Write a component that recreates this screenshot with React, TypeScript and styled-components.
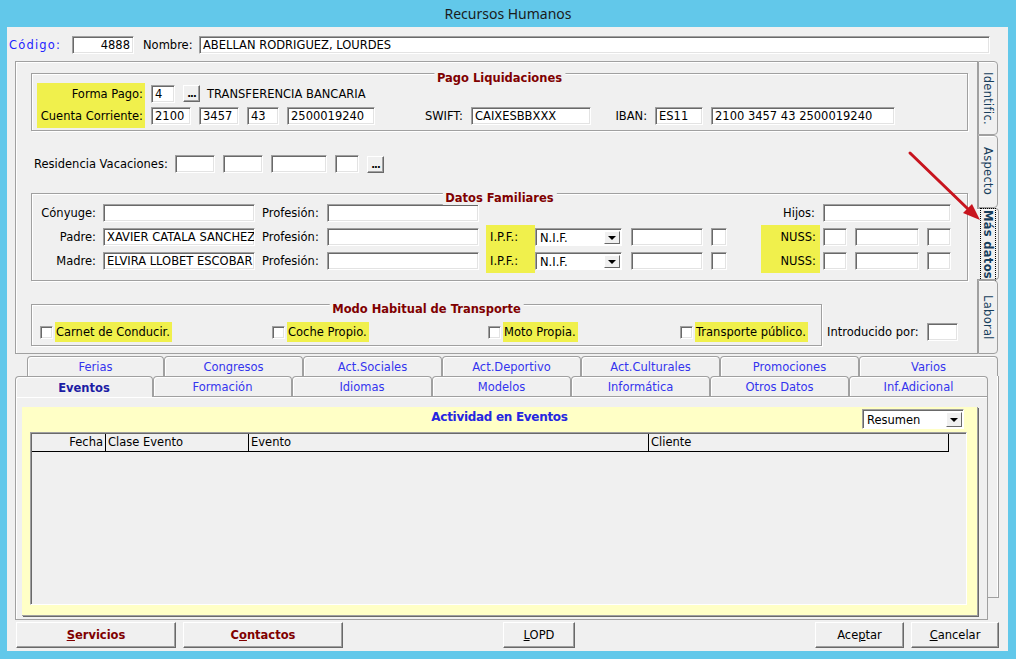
import React from "react";
import styled, { createGlobalStyle } from "styled-components";

const GlobalStyle = createGlobalStyle`
  html, body {
    margin: 0;
    padding: 0;
  }
  body {
    font-family: "DejaVu Sans", Verdana, sans-serif;
    font-size: 11.5px;
    color: #000;
  }
  * {
    box-sizing: border-box;
  }
`;

const YELLOW = "#f0f04c";
const GRAY = "#a0a0a0";

const Frame = styled.div`
  position: relative;
  width: 1016px;
  height: 659px;
  background: #62c8ea;
  display: flex;
  flex-direction: column;
  overflow: hidden;
`;

const TitleBar = styled.div`
  height: 27px;
  flex: none;
  display: flex;
  align-items: center;
  justify-content: center;
  font-family: "Noto Sans", "Open Sans", sans-serif;
  font-size: 14px;
  color: #1b1b1b;
  padding-bottom: 1px;
`;

const Client = styled.div`
  margin: 0 8px 0 7px;
  height: 624px;
  background: #f0f0f0;
  display: flex;
  flex-direction: column;
  align-items: flex-start;
`;

const Row = styled.div<{ $h?: number; $mt?: number; $pl?: number }>`
  display: flex;
  align-items: center;
  flex: none;
  height: ${(p) => p.$h ?? 18}px;
  margin-top: ${(p) => p.$mt ?? 0}px;
  padding-left: ${(p) => p.$pl ?? 0}px;
`;

const Label = styled.div<{
  $w?: number;
  $right?: boolean;
  $pl?: number;
  $pr?: number;
  $color?: string;
  $spacing?: number;
}>`
  flex: none;
  width: ${(p) => (p.$w ? `${p.$w}px` : "auto")};
  text-align: ${(p) => (p.$right ? "right" : "left")};
  padding-left: ${(p) => p.$pl ?? 0}px;
  padding-right: ${(p) => p.$pr ?? 0}px;
  color: ${(p) => p.$color ?? "#000"};
  letter-spacing: ${(p) => p.$spacing ?? 0}px;
  white-space: nowrap;
  line-height: 18px;
`;

const Field = styled.div<{ $w: number; $ml?: number; $right?: boolean }>`
  flex: none;
  width: ${(p) => p.$w}px;
  height: 18px;
  margin-left: ${(p) => p.$ml ?? 0}px;
  background: #fff;
  border-top: 1px solid ${GRAY};
  border-left: 1px solid ${GRAY};
  border-right: 1px solid #fff;
  border-bottom: 1px solid #fff;
  box-shadow: inset 1px 1px 0 #696969, inset -1px -1px 0 #e3e3e3;
  padding: 0 3px;
  line-height: 17px;
  white-space: nowrap;
  overflow: hidden;
  text-align: ${(p) => (p.$right ? "right" : "left")};
`;

const DotsButton = styled.div<{ $ml?: number }>`
  flex: none;
  width: 17px;
  height: 17px;
  margin-left: ${(p) => p.$ml ?? 0}px;
  border-top: 1px solid #fff;
  border-left: 1px solid #fff;
  border-right: 1px solid #696969;
  border-bottom: 1px solid #696969;
  box-shadow: inset -1px -1px 0 ${GRAY};
  font-weight: bold;
  font-size: 10px;
  line-height: 16px;
  text-align: center;
  letter-spacing: -1px;
`;

const Yellow = styled.div<{ $w: number; $ml?: number; $right?: boolean; $pl?: number; $pr?: number }>`
  flex: none;
  align-self: stretch;
  width: ${(p) => p.$w}px;
  margin-left: ${(p) => p.$ml ?? 0}px;
  background: ${YELLOW};
  display: flex;
  align-items: center;
  justify-content: ${(p) => (p.$right ? "flex-end" : "flex-start")};
  padding-left: ${(p) => p.$pl ?? 0}px;
  padding-right: ${(p) => p.$pr ?? 0}px;
  white-space: nowrap;
`;

const Select = styled.div<{ $w: number; $h?: number; $ml?: number }>`
  flex: none;
  display: flex;
  width: ${(p) => p.$w}px;
  height: ${(p) => p.$h ?? 18}px;
  margin-left: ${(p) => p.$ml ?? 0}px;
  background: #fff;
  border-top: 1px solid ${GRAY};
  border-left: 1px solid ${GRAY};
  border-right: 1px solid #fff;
  border-bottom: 1px solid #fff;
  box-shadow: inset 1px 1px 0 #696969;
  padding: 2px 1px 1px 2px;
`;

const SelectText = styled.span`
  flex: 1;
  padding-left: 2px;
  display: flex;
  align-items: center;
  white-space: nowrap;
`;

const DropButton = styled.span`
  flex: none;
  width: 16px;
  background: #f0f0f0;
  border-top: 1px solid #fff;
  border-left: 1px solid #fff;
  border-right: 1px solid #696969;
  border-bottom: 1px solid #696969;
  display: flex;
  align-items: center;
  justify-content: center;

  &::after {
    content: "";
    border-left: 4px solid transparent;
    border-right: 4px solid transparent;
    border-top: 4px solid #000;
    margin-top: 1px;
  }
`;

const MainRow = styled.div`
  display: flex;
  margin-top: 7px;
  margin-left: 8px;
  height: 293px;
  flex: none;
`;

const Panel = styled.div`
  position: relative;
  width: 963px;
  height: 293px;
  flex: none;
  border: 1px solid ${GRAY};
  box-shadow: inset 1px 1px 0 #fff;
  display: flex;
  flex-direction: column;
  align-items: flex-start;
  padding-left: 15px;
`;

const Group = styled.div<{ $w: number; $h: number; $mt: number }>`
  position: relative;
  flex: none;
  width: ${(p) => p.$w}px;
  height: ${(p) => p.$h}px;
  margin-top: ${(p) => p.$mt}px;
  border: 1px solid ${GRAY};
  box-shadow: inset 1px 1px 0 #fff, 1px 1px 0 #fff;
`;

const GroupTitle = styled.div`
  position: absolute;
  top: -2px;
  left: 50%;
  transform: translateX(-50%);
  padding: 0 3px;
  background: #f0f0f0;
  color: #800000;
  font-weight: bold;
  white-space: nowrap;
  line-height: 13px;
`;

const GroupBody = styled.div<{ $pt: number; $pl?: number }>`
  display: flex;
  flex-direction: column;
  padding-top: ${(p) => p.$pt}px;
  padding-left: ${(p) => p.$pl ?? 0}px;
`;

const PlainText = styled.span<{ $ml?: number }>`
  margin-left: ${(p) => p.$ml ?? 0}px;
  white-space: nowrap;
`;

const TransportRow = styled.div`
  display: flex;
  align-items: flex-start;
  margin-top: 23px;
  flex: none;
`;

const CheckItem = styled.div<{ $w?: number }>`
  flex: none;
  display: flex;
  align-items: center;
  width: ${(p) => (p.$w ? `${p.$w}px` : "auto")};
  height: 20px;
`;

const CheckBox = styled.span`
  flex: none;
  width: 13px;
  height: 13px;
  margin-right: 2px;
  background: #fff;
  border-top: 1px solid ${GRAY};
  border-left: 1px solid ${GRAY};
  border-right: 1px solid #fff;
  border-bottom: 1px solid #fff;
  box-shadow: inset 1px 1px 0 #696969, inset -1px -1px 0 #e3e3e3;
`;

const CheckLabel = styled.span`
  height: 20px;
  line-height: 20px;
  background: ${YELLOW};
  padding: 0 2px 0 1px;
  white-space: nowrap;
`;

const SideBlock = styled.div`
  display: flex;
  align-items: center;
  margin-top: 19px;
`;

const VTabs = styled.div`
  display: flex;
  flex-direction: column;
  width: 21px;
  flex: none;
`;

const VTab = styled.div<{ $h: number; $active?: boolean }>`
  position: relative;
  height: ${(p) => p.$h}px;
  width: ${(p) => (p.$active ? 22 : 20)}px;
  margin-left: ${(p) => (p.$active ? -1 : 0)}px;
  background: #f0f0f0;
  border: 1px solid ${GRAY};
  border-left: ${(p) => (p.$active ? "none" : `1px solid ${GRAY}`)};
  border-radius: 0 4px 4px 0;
  box-shadow: inset 0 1px 0 #fff;
  display: flex;
  align-items: center;
  justify-content: center;
  color: #173e5c;
  font-weight: ${(p) => (p.$active ? "bold" : "normal")};
`;

const VText = styled.span<{ $focus?: boolean }>`
  writing-mode: vertical-rl;
  white-space: nowrap;
  letter-spacing: 0.3px;
  outline: ${(p) => (p.$focus ? "1px dotted #000" : "none")};
  padding: 1px 0;
`;

const Arrow = styled.svg`
  position: absolute;
  left: 900px;
  top: 145px;
  width: 90px;
  height: 85px;
  pointer-events: none;
`;

const Lower = styled.div`
  margin-top: 2px;
  margin-left: 8px;
  display: flex;
  flex-direction: column;
  flex: none;
`;

const TabRow = styled.div<{ $ml?: number }>`
  display: flex;
  margin-left: ${(p) => p.$ml ?? 0}px;
  height: 20px;
  position: relative;
`;

const Tab = styled.div<{ $w: number; $active?: boolean }>`
  position: relative;
  z-index: ${(p) => (p.$active ? 2 : 0)};
  flex: none;
  width: ${(p) => p.$w}px;
  height: ${(p) => (p.$active ? 21 : 20)}px;
  background: #f0f0f0;
  border: 1px solid ${GRAY};
  border-bottom: none;
  border-radius: 4px 4px 0 0;
  box-shadow: inset 1px 1px 0 #fff;
  display: flex;
  align-items: center;
  justify-content: center;
  color: ${(p) => (p.$active ? "#1c1ca4" : "#3434ee")};
  font-weight: ${(p) => (p.$active ? "bold" : "normal")};
  white-space: nowrap;
  padding-top: ${(p) => (p.$active ? 2 : 0)}px;
`;

const FrontArea = styled.div`
  display: flex;
  align-items: flex-start;
`;

const FrontColumn = styled.div`
  display: flex;
  flex-direction: column;
  width: 973px;
`;

const BackEdge = styled.div`
  width: 11px;
  height: 222px;
  border-right: 1px solid ${GRAY};
  border-bottom: 1px solid ${GRAY};
  box-shadow: inset -1px 0 0 #fff;
`;

const Pane = styled.div`
  position: relative;
  z-index: 1;
  width: 973px;
  height: 224px;
  border: 1px solid ${GRAY};
  box-shadow: inset 1px 1px 0 #fff;
  padding: 10px 0 0 6px;
`;

const YellowPanel = styled.div`
  width: 956px;
  height: 209px;
  background: #ffffc6;
  border-right: 1px solid ${GRAY};
  border-bottom: 1px solid ${GRAY};
  box-shadow: 1px 1px 0 #696969;
  display: flex;
  flex-direction: column;
`;

const PanelHead = styled.div`
  display: grid;
  grid-template-columns: 1fr auto 1fr;
  height: 25px;
`;

const PanelTitle = styled.div`
  grid-column: 2;
  padding-top: 3px;
  line-height: 14px;
  color: #2626e0;
  font-weight: bold;
  font-size: 12px;
  letter-spacing: -0.3px;
`;

const HeadRight = styled.div`
  grid-column: 3;
  display: flex;
  justify-content: flex-end;
  padding: 2px 13px 0 0;
`;

const Grid = styled.div`
  margin-left: 8px;
  width: 937px;
  height: 173px;
  background: #f0f0f0;
  border-top: 1px solid ${GRAY};
  border-left: 1px solid ${GRAY};
  border-right: 1px solid #fff;
  border-bottom: 1px solid #fff;
  box-shadow: inset 1px 1px 0 #696969;
  padding: 1px 0 0 1px;
`;

const GridHead = styled.div`
  display: inline-flex;
  border-bottom: 1px solid #000;
`;

const HeadCell = styled.div<{ $w: number; $right?: boolean }>`
  width: ${(p) => p.$w}px;
  height: 17px;
  line-height: 16px;
  border-right: 1px solid #000;
  padding: 0 2px;
  text-align: ${(p) => (p.$right ? "right" : "left")};
  white-space: nowrap;
`;

const ButtonBar = styled.div`
  display: flex;
  margin-top: 2px;
  padding-left: 9px;
  height: 26px;
  flex: none;
`;

const Button = styled.div<{ $w: number; $ml?: number; $strong?: boolean }>`
  flex: none;
  width: ${(p) => p.$w}px;
  height: 26px;
  margin-left: ${(p) => p.$ml ?? 0}px;
  background: #f0f0f0;
  border-top: 1px solid #fff;
  border-left: 1px solid #fff;
  border-right: 1px solid #696969;
  border-bottom: 1px solid #696969;
  box-shadow: inset -1px -1px 0 ${GRAY};
  display: flex;
  align-items: center;
  justify-content: center;
  color: ${(p) => (p.$strong ? "#800000" : "#000")};
  font-weight: ${(p) => (p.$strong ? "bold" : "normal")};
`;

const backTabs = [
  { label: "Ferias", w: 137 },
  { label: "Congresos", w: 139 },
  { label: "Act.Sociales", w: 139 },
  { label: "Act.Deportivo", w: 139 },
  { label: "Act.Culturales", w: 139 },
  { label: "Promociones", w: 139 },
  { label: "Varios", w: 139 },
];

const frontTabs = [
  { label: "Eventos", w: 138, active: true },
  { label: "Formación", w: 139 },
  { label: "Idiomas", w: 140 },
  { label: "Modelos", w: 139 },
  { label: "Informática", w: 139 },
  { label: "Otros Datos", w: 139 },
  { label: "Inf.Adicional", w: 139 },
];

const sideTabs = [
  { label: "Identific.", h: 74 },
  { label: "Aspecto", h: 73 },
  { label: "Más datos", h: 72, active: true },
  { label: "Laboral", h: 74 },
];

const parents = [
  { role: "Padre:", name: "XAVIER CATALA SANCHEZ" },
  { role: "Madre:", name: "ELVIRA LLOBET ESCOBAR" },
];

const App = () => {
  return (
    <Frame>
      <GlobalStyle />
      <TitleBar>Recursos Humanos</TitleBar>
      <Client>
        <Row $mt={9} $pl={2}>
          <Label $w={63} $color="#2323ff" $spacing={1.2}>
            Código:
          </Label>
          <Field $w={62} $right>
            4888
          </Field>
          <Label $w={65} $pl={9}>
            Nombre:
          </Label>
          <Field $w={791}>ABELLAN RODRIGUEZ, LOURDES</Field>
        </Row>

        <MainRow>
          <Panel>
            <Group $w={937} $h={58} $mt={11}>
              <GroupTitle>Pago Liquidaciones</GroupTitle>
              <GroupBody $pt={9} $pl={5}>
                <Row $h={21}>
                  <Yellow $w={108} $right $pr={2}>
                    Forma Pago:
                  </Yellow>
                  <Field $w={24} $ml={6}>
                    4
                  </Field>
                  <DotsButton $ml={8}>...</DotsButton>
                  <PlainText $ml={7}>TRANSFERENCIA BANCARIA</PlainText>
                </Row>
                <Row $h={24}>
                  <Yellow $w={108} $right $pr={2}>
                    Cuenta Corriente:
                  </Yellow>
                  <Field $w={40} $ml={6}>
                    2100
                  </Field>
                  <Field $w={40} $ml={8}>
                    3457
                  </Field>
                  <Field $w={32} $ml={8}>
                    43
                  </Field>
                  <Field $w={88} $ml={8}>
                    2500019240
                  </Field>
                  <Label $w={96} $right $pr={8}>
                    SWIFT:
                  </Label>
                  <Field $w={120}>CAIXESBBXXX</Field>
                  <Label $w={64} $right $pr={8}>
                    IBAN:
                  </Label>
                  <Field $w={48}>ES11</Field>
                  <Field $w={184} $ml={8}>
                    2100 3457 43 2500019240
                  </Field>
                </Row>
              </GroupBody>
            </Group>

            <Row $mt={24}>
              <Label $w={144} $pl={3}>
                Residencia Vacaciones:
              </Label>
              <Field $w={40} />
              <Field $w={40} $ml={8} />
              <Field $w={56} $ml={8} />
              <Field $w={24} $ml={8} />
              <DotsButton $ml={8}>...</DotsButton>
            </Row>

            <Group $w={937} $h={88} $mt={20}>
              <GroupTitle>Datos Familiares</GroupTitle>
              <GroupBody $pt={7}>
                <Row $h={24}>
                  <Label $w={71} $right $pr={7}>
                    Cónyuge:
                  </Label>
                  <Field $w={152} />
                  <Label $w={72} $pl={7}>
                    Profesión:
                  </Label>
                  <Field $w={152} />
                  <Label $w={344} $right $pr={8}>
                    Hijos:
                  </Label>
                  <Field $w={128} />
                </Row>
                {parents.map((p) => (
                  <Row $h={24} key={p.role}>
                    <Label $w={71} $right $pr={7}>
                      {p.role}
                    </Label>
                    <Field $w={152}>{p.name}</Field>
                    <Label $w={72} $pl={7}>
                      Profesión:
                    </Label>
                    <Field $w={152} />
                    <Yellow $w={49} $ml={7} $pl={4}>
                      I.P.F.:
                    </Yellow>
                    <Select $w={87}>
                      <SelectText>N.I.F.</SelectText>
                      <DropButton />
                    </Select>
                    <Field $w={72} $ml={9} />
                    <Field $w={16} $ml={8} />
                    <Yellow $w={59} $ml={34} $right $pr={4}>
                      NUSS:
                    </Yellow>
                    <Field $w={24} $ml={3} />
                    <Field $w={64} $ml={8} />
                    <Field $w={24} $ml={8} />
                  </Row>
                ))}
              </GroupBody>
            </Group>

            <TransportRow>
              <Group $w={791} $h={42} $mt={0}>
                <GroupTitle>Modo Habitual de Transporte</GroupTitle>
                <GroupBody $pt={17}>
                  <Row $h={20} $pl={8}>
                    <CheckItem $w={232}>
                      <CheckBox />
                      <CheckLabel>Carnet de Conducir.</CheckLabel>
                    </CheckItem>
                    <CheckItem $w={216}>
                      <CheckBox />
                      <CheckLabel>Coche Propio.</CheckLabel>
                    </CheckItem>
                    <CheckItem $w={192}>
                      <CheckBox />
                      <CheckLabel>Moto Propia.</CheckLabel>
                    </CheckItem>
                    <CheckItem>
                      <CheckBox />
                      <CheckLabel>Transporte público.</CheckLabel>
                    </CheckItem>
                  </Row>
                </GroupBody>
              </Group>
              <SideBlock>
                <Label $w={105} $pl={5}>
                  Introducido por:
                </Label>
                <Field $w={31} />
              </SideBlock>
            </TransportRow>
          </Panel>

          <VTabs>
            {sideTabs.map((t) => (
              <VTab key={t.label} $h={t.h} $active={t.active}>
                <VText $focus={t.active}>{t.label}</VText>
              </VTab>
            ))}
          </VTabs>
        </MainRow>

        <Lower>
          <TabRow $ml={12}>
            {backTabs.map((t) => (
              <Tab key={t.label} $w={t.w}>
                {t.label}
              </Tab>
            ))}
          </TabRow>
          <FrontArea>
            <FrontColumn>
              <TabRow>
                {frontTabs.map((t) => (
                  <Tab key={t.label} $w={t.w} $active={t.active}>
                    {t.label}
                  </Tab>
                ))}
              </TabRow>
              <Pane>
                <YellowPanel>
                  <PanelHead>
                    <PanelTitle>Actividad en Eventos</PanelTitle>
                    <HeadRight>
                      <Select $w={102} $h={20}>
                        <SelectText>Resumen</SelectText>
                        <DropButton />
                      </Select>
                    </HeadRight>
                  </PanelHead>
                  <Grid>
                    <GridHead>
                      <HeadCell $w={74} $right>
                        Fecha
                      </HeadCell>
                      <HeadCell $w={143}>Clase Evento</HeadCell>
                      <HeadCell $w={400}>Evento</HeadCell>
                      <HeadCell $w={300}>Cliente</HeadCell>
                    </GridHead>
                  </Grid>
                </YellowPanel>
              </Pane>
            </FrontColumn>
            <BackEdge />
          </FrontArea>
        </Lower>

        <ButtonBar>
          <Button $w={160} $strong>
            <span>
              <u>S</u>ervicios
            </span>
          </Button>
          <Button $w={160} $ml={7} $strong>
            <span>
              C<u>o</u>ntactos
            </span>
          </Button>
          <Button $w={72} $ml={160}>
            <span>
              <u>L</u>OPD
            </span>
          </Button>
          <Button $w={89} $ml={240}>
            <span>
              Ace<u>p</u>tar
            </span>
          </Button>
          <Button $w={88} $ml={7}>
            <span>
              <u>C</u>ancelar
            </span>
          </Button>
        </ButtonBar>
      </Client>

      <Arrow viewBox="0 0 90 85">
        <line x1="10" y1="8" x2="68" y2="64" stroke="#c8141e" strokeWidth="3" strokeLinecap="round" />
        <polygon points="80,75 63,68 72,59" fill="#c8141e" />
      </Arrow>
    </Frame>
  );
};

export default App;
